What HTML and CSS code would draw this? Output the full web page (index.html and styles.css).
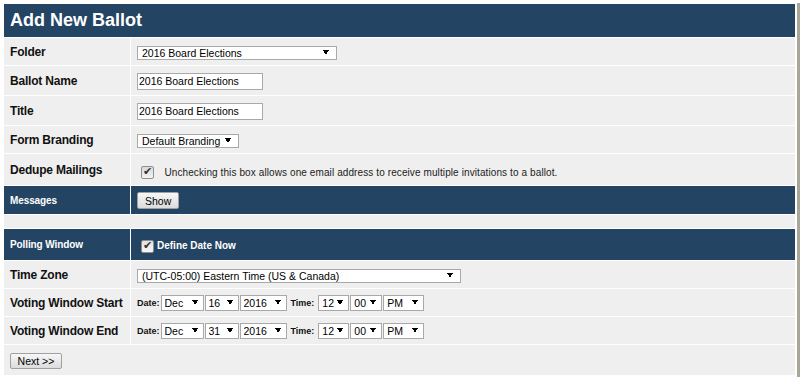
FILE: index.html
```html
<!DOCTYPE html>
<html lang="en">
<head>
    <meta charset="UTF-8">
    <title>Add New Ballot</title>
    <link rel="stylesheet" href="styles.css">
</head>
<body>
    <div class="page">
        <table class="ballot-form">
            <colgroup>
                <col class="col-label">
                <col>
            </colgroup>
            <tr class="title-row">
                <th colspan="2">Add New Ballot</th>
            </tr>
            <tr class="row-sm">
                <td class="label">Folder</td>
                <td><select class="sel w-folder"><option>2016 Board Elections</option></select></td>
            </tr>
            <tr class="row-md">
                <td class="label">Ballot Name</td>
                <td><input class="txt" type="text" value="2016 Board Elections"></td>
            </tr>
            <tr class="row-md">
                <td class="label">Title</td>
                <td><input class="txt" type="text" value="2016 Board Elections"></td>
            </tr>
            <tr class="row-sm">
                <td class="label">Form Branding</td>
                <td><select class="sel w-brand"><option>Default Branding</option></select></td>
            </tr>
            <tr class="row-lg">
                <td class="label">Dedupe Mailings</td>
                <td class="dedupe">
                    <input class="check" type="checkbox" checked>
                    <span class="hint">Unchecking this box allows one email address to receive multiple invitations to a ballot.</span>
                </td>
            </tr>
            <tr class="section messages">
                <td class="label">Messages</td>
                <td><button class="btn" type="button">Show</button></td>
            </tr>
            <tr class="spacer">
                <td colspan="2"></td>
            </tr>
            <tr class="section row-lg">
                <td class="label">Polling Window</td>
                <td>
                    <label class="define"><input class="check" type="checkbox" checked>Define Date Now</label>
                </td>
            </tr>
            <tr class="row-sm">
                <td class="label">Time Zone</td>
                <td><select class="sel w-zone"><option>(UTC-05:00) Eastern Time (US &amp; Canada)</option></select></td>
            </tr>
            <tr class="row-sm">
                <td class="label">Voting Window Start</td>
                <td>
                    <div class="datetime">
                        <span class="dt-label">Date:</span>
                        <select class="sel tall w-month"><option>Dec</option></select>
                        <select class="sel tall w-day"><option>16</option></select>
                        <select class="sel tall w-year"><option>2016</option></select>
                        <span class="dt-label time">Time:</span>
                        <select class="sel tall w-hour"><option>12</option></select>
                        <select class="sel tall w-min"><option>00</option></select>
                        <select class="sel tall w-ampm"><option>PM</option></select>
                    </div>
                </td>
            </tr>
            <tr class="row-sm">
                <td class="label">Voting Window End</td>
                <td>
                    <div class="datetime">
                        <span class="dt-label">Date:</span>
                        <select class="sel tall w-month"><option>Dec</option></select>
                        <select class="sel tall w-day"><option>31</option></select>
                        <select class="sel tall w-year"><option>2016</option></select>
                        <span class="dt-label time">Time:</span>
                        <select class="sel tall w-hour"><option>12</option></select>
                        <select class="sel tall w-min"><option>00</option></select>
                        <select class="sel tall w-ampm"><option>PM</option></select>
                    </div>
                </td>
            </tr>
            <tr class="footer">
                <td colspan="2"><button class="btn next" type="button">Next &gt;&gt;</button></td>
            </tr>
        </table>
    </div>
</body>
</html>
```

FILE: styles.css
```css
body {
    margin: 0;
    background: #fff;
    font-family: "Liberation Sans", Arial, sans-serif;
    color: #111;
}
.page {
    width: 791px;
    height: 373px;
    padding: 4px 2px 0 4px;
    background: #fff;
    box-shadow: 3px 3px 0 #a9a699;
}
.ballot-form {
    width: 791px;
    border-collapse: separate;
    border-spacing: 0;
    table-layout: fixed;
}
.col-label {
    width: 127px;
}
.ballot-form td,
.ballot-form th {
    background: #efefef;
    border-bottom: 1px solid #fff;
    padding: 0 6px;
    vertical-align: middle;
    box-sizing: border-box;
}
.ballot-form td.label {
    border-right: 1px solid #fff;
    font-size: 12px;
    font-weight: bold;
    letter-spacing: -0.2px;
    white-space: nowrap;
}
.title-row th {
    height: 34px;
    background: #234563;
    color: #fff;
    font-size: 18px;
    text-align: left;
}
.row-sm td { height: 28px; }
.row-md td { height: 30px; }
.row-lg td { height: 32px; }
.messages td { height: 29px; }
.spacer td { height: 14px; }
.footer td { height: 30px; border-bottom: 0; }

.section td {
    background: #234563;
    color: #fff;
}
.section td.label {
    font-size: 10px;
    letter-spacing: -0.1px;
}

/* form controls */
.sel {
    -webkit-appearance: none;
    appearance: none;
    box-sizing: border-box;
    height: 14px;
    margin: 0;
    padding: 0 12px 0 4px;
    border: 1px solid #a9a9a9;
    border-radius: 0;
    background-color: #fff;
    background-image:
        linear-gradient(to bottom left, #000 50%, transparent 50%),
        linear-gradient(to bottom right, #000 50%, transparent 50%);
    background-size: 3px 5px, 3px 5px;
    background-position: right 10px center, right 7px center;
    background-repeat: no-repeat;
    font: 10.5px "Liberation Sans", Arial, sans-serif;
    color: #000;
}
.sel.tall {
    height: 16px;
    padding-left: 3px;
    background-position: right 8px center, right 5px center;
}
.w-folder { width: 200px; }
.w-brand { width: 102px; }
.w-zone { width: 324px; }
.w-month { width: 43px; }
.w-day { width: 34px; }
.w-year { width: 47px; }
.w-hour { width: 31px; }
.w-min { width: 32px; }
.w-ampm { width: 41px; }

.txt {
    box-sizing: border-box;
    width: 126px;
    height: 17px;
    margin: 0;
    padding: 0 1px;
    border: 1px solid #a9a9a9;
    font: 10.5px "Liberation Sans", Arial, sans-serif;
    color: #000;
}
.check {
    -webkit-appearance: none;
    appearance: none;
    position: relative;
    width: 13px;
    height: 13px;
    margin: 0 6px 0 4px;
    border: 1px solid #8e8f8f;
    border-radius: 2px;
    background: linear-gradient(#d9d9d9, #f3f3f3);
    vertical-align: middle;
}
.check:checked::after {
    content: "\2714";
    position: absolute;
    left: 1px;
    top: -2px;
    font: 11px "DejaVu Sans", sans-serif;
    color: #333;
}
.dedupe {
    padding-top: 4px !important;
}
.hint {
    font-size: 10px;
    letter-spacing: 0.1px;
    color: #222;
    vertical-align: middle;
    white-space: nowrap;
}
.define {
    font-size: 10px;
    font-weight: bold;
    display: inline-block;
    padding-top: 4px;
}
.define .check {
    margin-right: 3px;
    background: linear-gradient(#e2e2e2, #f6f6f6);
}
.btn {
    box-sizing: border-box;
    height: 17px;
    margin: 0;
    padding: 0 7px;
    border: 1px solid #a0a0a0;
    border-radius: 2px;
    background: linear-gradient(#f7f7f7, #dcdcdc);
    font: 10.5px "Liberation Sans", Arial, sans-serif;
    color: #000;
}
.btn.next {
    height: 16px;
    width: 52px;
    padding: 0;
}
.datetime {
    display: flex;
    align-items: center;
    gap: 1px;
}
.dt-label {
    font-size: 9px;
    font-weight: bold;
}
.dt-label.time {
    margin: 0 3px;
}
```
